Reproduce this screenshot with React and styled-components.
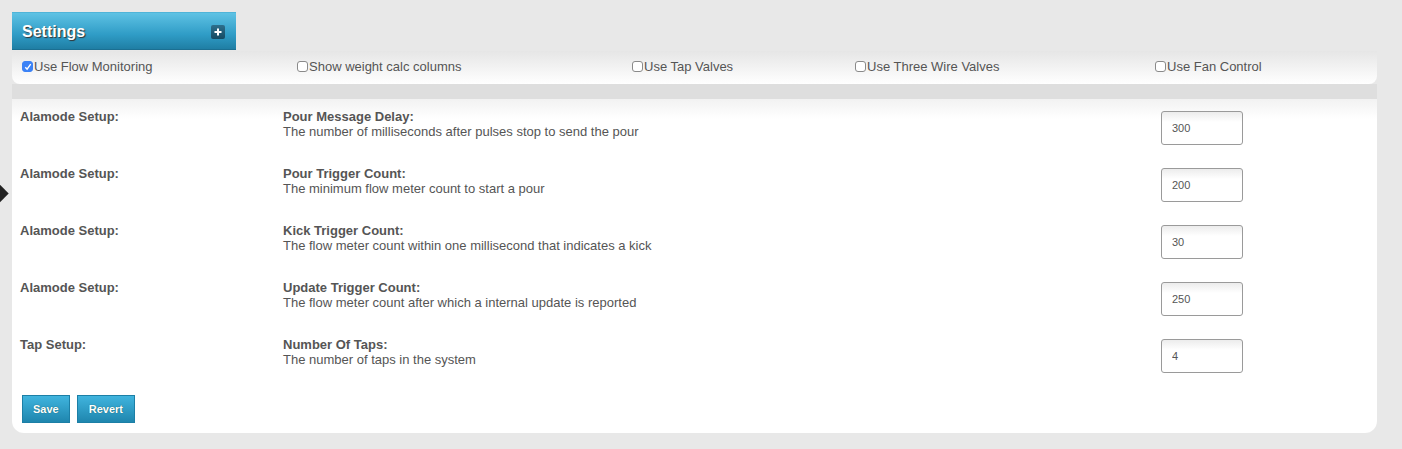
import React, { useState } from "react";
import styled, { createGlobalStyle } from "styled-components";

const GlobalStyle = createGlobalStyle`
  html, body {
    margin: 0;
    padding: 0;
    background: #e8e8e8;
    font-family: "Liberation Sans", Arial, Helvetica, sans-serif;
  }
`;

const Page = styled.div`
  position: relative;
  padding: 12px 25px 15px 12px;
`;

const Arrow = styled.div`
  position: absolute;
  left: -7px;
  top: 187px;
  width: 13px;
  height: 13px;
  background: #222;
  transform: rotate(45deg);
`;

const Tab = styled.div`
  width: 224px;
  height: 38px;
  box-sizing: border-box;
  padding: 2px 11px 0 10px;
  display: flex;
  align-items: center;
  justify-content: space-between;
  background: linear-gradient(#5ec2e4, #2f9cc6 60%, #1f7ea4);
  border-top: 1px solid #4fb4d8;
  border-bottom: 1px solid #1b6f92;
`;

const TabTitle = styled.span`
  color: #fff;
  font-weight: bold;
  font-size: 16px;
  text-shadow: 1px 1px 1px #333;
`;

const PlusBox = styled.span`
  width: 14px;
  height: 14px;
  border-radius: 2px;
  background: linear-gradient(#2d6f8c, #154a62);
  display: flex;
  align-items: center;
  justify-content: center;
`;

const OptionsBar = styled.div`
  height: 33px;
  margin-top: 1px;
  display: grid;
  grid-template-columns: 275px 335px 223px 300px 1fr;
  align-items: center;
  padding-left: 10px;
  background: linear-gradient(#e6e6e6, #fff);
  border-radius: 0 0 8px 8px;
`;

const Option = styled.label`
  display: flex;
  align-items: center;
  font-size: 13px;
  color: #555;
  cursor: pointer;
  margin-top: -2px;
`;

const Box = styled.span`
  width: 11px;
  height: 11px;
  margin-right: 1px;
  box-sizing: border-box;
  border-radius: 3px;
  border: 1px solid ${(p) => (p.$checked ? "#3b82f6" : "#8a8a8a")};
  background: ${(p) => (p.$checked ? "#3b82f6" : "#fff")};
  display: flex;
  align-items: center;
  justify-content: center;
`;

const Spacer = styled.div`
  height: 15px;
  background: #dedede;
`;

const Content = styled.div`
  background: linear-gradient(#f2f2f2, #fff 20px);
  border-radius: 0 0 12px 12px;
  padding: 11px 0 10px 8px;
`;

const Row = styled.div`
  display: grid;
  grid-template-columns: 263px 1fr 82px;
  padding-right: 134px;
  margin-bottom: 22px;
  align-items: start;
  font-size: 13px;
  color: #555;
  line-height: 14px;
`;

const Label = styled.div`
  font-weight: bold;
`;

const Name = styled.div`
  font-weight: bold;
`;

const Desc = styled.div`
  margin-top: 1px;
`;

const Input = styled.input`
  width: 82px;
  height: 34px;
  margin-top: 1px;
  box-sizing: border-box;
  border: 1px solid #9a9a9a;
  border-radius: 3px;
  padding: 0 10px;
  font-family: inherit;
  font-size: 11px;
  color: #555;
  background: linear-gradient(#ececec, #fff 10px);
  outline: none;
`;

const Buttons = styled.div`
  display: flex;
  gap: 7px;
  margin-top: 1px;
  padding-left: 2px;
`;

const Button = styled.button`
  height: 28px;
  padding: 0 ${(p) => p.$pad}px;
  border: 1px solid #1c7fa6;
  background: linear-gradient(#40b4de, #1f86ae);
  color: #fff;
  font-family: inherit;
  font-weight: bold;
  font-size: 11px;
  text-shadow: 0 0 1px #155;
  cursor: pointer;
`;

const options = [
  "Use Flow Monitoring",
  "Show weight calc columns",
  "Use Tap Valves",
  "Use Three Wire Valves",
  "Use Fan Control",
];

const settings = [
  { group: "Alamode Setup:", name: "Pour Message Delay:", desc: "The number of milliseconds after pulses stop to send the pour", value: "300" },
  { group: "Alamode Setup:", name: "Pour Trigger Count:", desc: "The minimum flow meter count to start a pour", value: "200" },
  { group: "Alamode Setup:", name: "Kick Trigger Count:", desc: "The flow meter count within one millisecond that indicates a kick", value: "30" },
  { group: "Alamode Setup:", name: "Update Trigger Count:", desc: "The flow meter count after which a internal update is reported", value: "250" },
  { group: "Tap Setup:", name: "Number Of Taps:", desc: "The number of taps in the system", value: "4" },
];

const App = () => {
  const [checked, setChecked] = useState([true, false, false, false, false]);
  const toggle = (i) => setChecked((c) => c.map((v, j) => (j === i ? !v : v)));

  return (
    <Page>
      <GlobalStyle />
      <Arrow />
      <Tab>
        <TabTitle>Settings</TabTitle>
        <PlusBox>
          <svg width="8" height="8" viewBox="0 0 8 8">
            <path d="M4 0.5v7M0.5 4h7" stroke="#fff" strokeWidth="2" />
          </svg>
        </PlusBox>
      </Tab>
      <OptionsBar>
        {options.map((o, i) => (
          <Option key={o} onClick={() => toggle(i)}>
            <Box $checked={checked[i]}>
              {checked[i] && (
                <svg width="8" height="8" viewBox="0 0 8 8">
                  <path d="M1.3 4.2l1.8 2 3.6-5" stroke="#fff" strokeWidth="1.4" fill="none" />
                </svg>
              )}
            </Box>
            {o}
          </Option>
        ))}
      </OptionsBar>
      <Spacer />
      <Content>
        {settings.map((s) => (
          <Row key={s.name}>
            <Label>{s.group}</Label>
            <div>
              <Name>{s.name}</Name>
              <Desc>{s.desc}</Desc>
            </div>
            <Input defaultValue={s.value} />
          </Row>
        ))}
        <Buttons>
          <Button $pad={10}>Save</Button>
          <Button $pad={11}>Revert</Button>
        </Buttons>
      </Content>
    </Page>
  );
};

export default App;
